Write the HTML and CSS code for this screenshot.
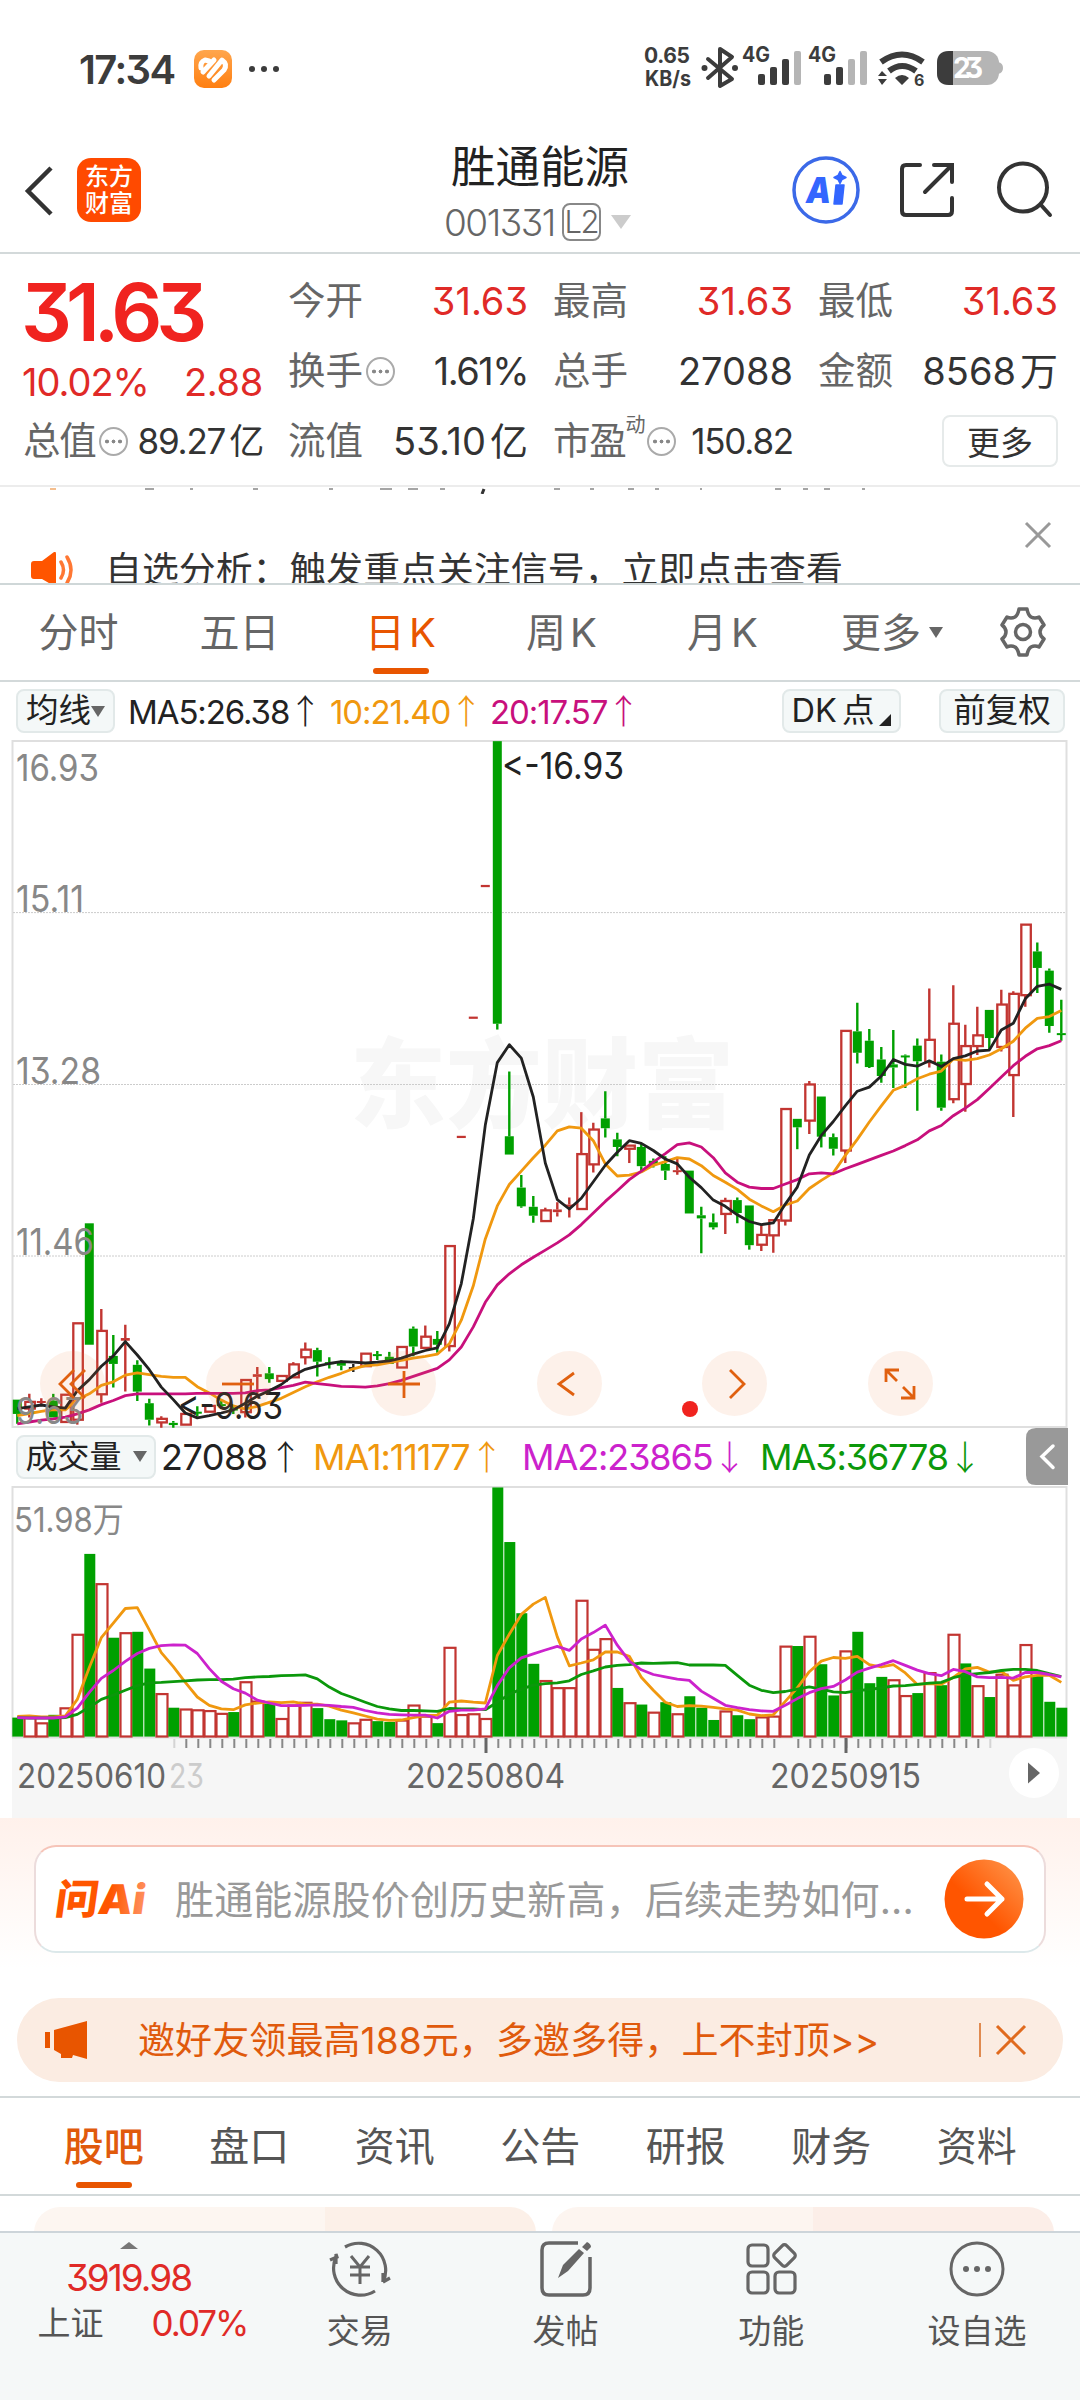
FILE: index.html
```html
<!DOCTYPE html>
<html lang="zh-CN">
<head>
    <meta charset="UTF-8">
    <meta name="viewport" content="width=device-width, initial-scale=1.0">
    <title>胜通能源 001331</title>
    <link rel="stylesheet" href="styles.css">
</head>
<body>
    <!-- Status bar -->
    <div class="status-bar">
        <span class="clock">17:34</span>
        <svg class="app-badge" width="38" height="38" viewBox="0 0 38 38">
            <defs><linearGradient id="badge" x1="0" y1="0" x2="0" y2="1"><stop offset="0" stop-color="#ffa64d"/><stop offset="1" stop-color="#ff7f11"/></linearGradient></defs>
            <rect width="38" height="38" rx="10" fill="url(#badge)"/>
            <g stroke="#fff" stroke-width="5" stroke-linecap="round" stroke-linejoin="round" fill="none"><path d="M7 18q-1-6 4-8l4 1M9 22L20 10M15 26L28 10q6 4 2 10L20 30"/></g>
        </svg>
        <svg class="dots" width="34" height="8" viewBox="0 0 34 8"><g fill="#3c3c3c"><circle cx="4" cy="4" r="3"/><circle cx="16" cy="4" r="3"/><circle cx="28" cy="4" r="3"/></g></svg>
        <svg class="status-icons" width="364" height="70" viewBox="640 35 364 70">
            <g fill="#3c3c3c" font-family="Inter" font-weight="700">
                <text x="644" y="64" font-size="21" textLength="46">0.65</text>
                <text x="645" y="87" font-size="21" textLength="46" lengthAdjust="spacingAndGlyphs">KB/s</text>
                <text x="742" y="63" font-size="21" textLength="28" lengthAdjust="spacingAndGlyphs">4G</text>
                <text x="808" y="63" font-size="21" textLength="28" lengthAdjust="spacingAndGlyphs">4G</text>
                <text x="914" y="87" font-size="16">6</text>
            </g>
            <path d="M708 60l24 20-12 7V50l12 8-24 21" fill="none" stroke="#3c3c3c" stroke-width="4" stroke-linejoin="round" stroke-linecap="round"/>
            <circle cx="704.500" cy="69" r="3" fill="#3c3c3c"/><circle cx="735" cy="69" r="3" fill="#3c3c3c"/>
            <g fill="#3c3c3c">
                <rect x="758" y="75" width="7" height="11" rx="2"/><rect x="770" y="68" width="7" height="18" rx="2"/><rect x="782" y="60" width="7" height="26" rx="2"/>
                <rect x="824" y="75" width="7" height="11" rx="2"/><rect x="836" y="68" width="7" height="18" rx="2"/>
            </g>
            <g fill="#b5b5b5">
                <rect x="794" y="52" width="7" height="34" rx="2"/><rect x="848" y="60" width="7" height="26" rx="2"/><rect x="860" y="52" width="7" height="34" rx="2"/>
            </g>
            <g fill="none" stroke="#3c3c3c" stroke-width="6"><path d="M881 63q21-15 42 0M889 72q13-10 27 0"/></g>
            <path d="M895 79q7-6 14 0l-7 7zM878 77l4-5 5 5zM878 80h9l-5 6z" fill="#3c3c3c"/>
            <rect x="937" y="52" width="62" height="34" rx="12" fill="#b5b5b5"/>
            <path d="M998 63q5 1 5 6t-5 6z" fill="#b5b5b5"/>
            <path d="M953 52v34h-4q-12 0-12-12V64q0-12 12-12z" fill="#3c3c3c"/>
            <text x="953" y="79" font-family="Inter" font-weight="700" font-size="28" fill="#fff" textLength="30">23</text>
        </svg>
    </div>

    <!-- Title bar -->
    <header class="title-bar">
        <svg class="back" width="30" height="54" viewBox="0 0 30 54"><path d="M27 4L4 27l23 23" fill="none" stroke="#333" stroke-width="4.500"/></svg>
        <div class="logo">东方<br>财富</div>
        <div class="stock">
            <h1>胜通能源</h1>
            <div class="code">001331<span class="level">L2</span><i class="tri-down"></i></div>
        </div>
        <svg class="title-icons" width="264" height="70" viewBox="790 155 264 70">
            <circle cx="826" cy="190" r="32" fill="none" stroke="#3b69e8" stroke-width="3.500"/>
            <text x="806" y="203" font-family="Inter" font-weight="900" font-style="italic" font-size="36" fill="#3366ff" textLength="25" lengthAdjust="spacingAndGlyphs">A</text>
            <path d="M836 185h8l-2 19h-8zM840 171.500l2 4 4 2-4 2-2 4-2-4-4-2 4-2z" fill="#3366ff" stroke="#3366ff" stroke-width="1.500" stroke-linejoin="round"/>
            <g fill="none" stroke="#333" stroke-width="4" stroke-linecap="round">
                <path d="M920 165h-14q-4 0-4 4v42q0 4 4 4h42q4 0 4-4v-13M934 165h18v17M951 166l-26 26"/>
                <circle cx="1023" cy="187.500" r="24"/><path d="M1041 205l9 10"/>
            </g>
        </svg>
    </header>

    <!-- Quote -->
    <section class="quote">
        <div class="price">31.63</div>
        <div class="cell"><label>今开</label><b class="red">31.63</b></div>
        <div class="cell"><label>最高</label><b class="red">31.63</b></div>
        <div class="cell"><label>最低</label><b class="red">31.63</b></div>
        <div class="cell change"><b class="red">10.02%</b><b class="red">2.88</b></div>
        <div class="cell"><label>换手</label><i class="more-dots"></i><b class="pct">1.61%</b></div>
        <div class="cell"><label>总手</label><b>27088</b></div>
        <div class="cell"><label>金额</label><b>8568<span class="unit">万</span></b></div>
        <div class="cell small"><label>总值</label><i class="more-dots"></i><b>89.27<span class="unit">亿</span></b></div>
        <div class="cell"><label>流值</label><b>53.10<span class="unit">亿</span></b></div>
        <div class="cell small"><label>市盈</label><sup>动</sup><i class="more-dots"></i><b>150.82</b></div>
        <div class="cell last"><button class="more-btn">更多</button></div>
    </section>

    <!-- Scrolling notice -->
    <section class="notice">
        <svg class="tail" width="1080" height="6" viewBox="0 0 1080 6"><path d="M145 1h9M190 1h3M253 1h5M329 1h4M380 1h12M408 1h10M440 1h5M554 1h6M590 1h4M628 1h6M655 1h4M700 1h2M775 1h6M803 1h5M824 1h6M862 1h3" stroke="#888" stroke-width="1.500"/><path d="M50 1h6" stroke="#f0a868" stroke-width="1.500"/><path d="M484 1l-2 5" stroke="#333" stroke-width="3"/></svg>
        <svg class="close" width="28" height="28" viewBox="0 0 28 28"><path d="M2 2l24 24M26 2L2 26" stroke="#999" stroke-width="3"/></svg>
        <div class="notice-line">
            <svg width="44" height="36" viewBox="0 0 44 36"><path d="M3 9h8L23 0q2-1 2 2v30q0 3-2 2L11 27H3q-3 0-3-3V12q0-3 3-3z" fill="#ff5500"/><path d="M30 10q5 8 0 16M36 5q8 13 0 26" fill="none" stroke="#ff7733" stroke-width="3.500" stroke-linecap="round"/></svg>
            <span>自选分析：触发重点关注信号，立即点击查看</span>
        </div>
    </section>

    <!-- Period tabs -->
    <nav class="period-tabs">
        <span>分时</span>
        <span>五日</span>
        <span class="active">日<u>K</u></span>
        <span>周<u>K</u></span>
        <span>月<u>K</u></span>
        <span>更多<i class="tri-down dark"></i></span>
        <svg width="50" height="52" viewBox="-25 -26 50 52"><path d="M-4-23h8q1 6 4 8 4 2 8 0l5 8q-4 3-4 7t4 7l-5 8q-4-2-8 0-3 2-4 8h-8q-1-6-4-8-4-2-8 0l-5-8q4-3 4-7t-4-7l5-8q4 2 8 0 3-2 4-8z" fill="none" stroke="#666" stroke-width="3.500" stroke-linejoin="round"/><circle r="7.500" fill="none" stroke="#666" stroke-width="3.500"/></svg>
    </nav>

    <!-- Moving averages -->
    <div class="ma-row">
        <span class="chip">均线<i class="tri-down dark"></i></span>
        <span class="ma5">MA5:26.38<em>↑</em></span>
        <span class="ma10">10:21.40<em>↑</em></span>
        <span class="ma20">20:17.57<em>↑</em></span>
        <span class="chip dk">DK<span>点</span><i class="corner"></i></span>
        <span class="chip adj">前复权</span>
    </div>

    <!-- K line -->
    <div class="chart-box">
        <svg id="k-chart" width="1080" height="688" viewBox="0 740 1080 688"></svg>
        <div class="tools">
            <span><svg width="30" height="32" viewBox="0 0 30 32"><path d="M16 2L2 16l14 14M27 2L13 16l14 14"/></svg></span>
            <span><svg width="34" height="32" viewBox="0 0 34 32"><path d="M1 16h32"/></svg></span>
            <span><svg width="34" height="32" viewBox="0 0 34 32"><path d="M1 16h32M17 3v27"/></svg></span>
            <span><svg width="30" height="32" viewBox="0 0 30 32"><path d="M20 5L5 16l15 11"/></svg></span>
            <span><svg width="30" height="32" viewBox="0 0 30 32"><path d="M10 2l14 14-14 14"/></svg></span>
            <span><svg width="34" height="34" viewBox="0 0 34 34"><path d="M3 15V3h13M3 3l11 11M31 19v12H18M31 31L20 20"/></svg></span>
        </div>
    </div>

    <!-- Volume -->
    <div class="vol-row">
        <span class="chip">成交量<i class="tri-down dark"></i></span>
        <span class="v0">27088<em>↑</em></span>
        <span class="v1">MA1:11177<em>↑</em></span>
        <span class="v2">MA2:23865<em>↓</em></span>
        <span class="v3">MA3:36778<em>↓</em></span>
        <svg class="drawer" width="42" height="57" viewBox="0 0 42 57"><path d="M42 0H10Q0 0 0 10v37q0 10 10 10h32z" fill="#999"/><path d="M27 18L16 28.500l11 11" fill="none" stroke="#fff" stroke-width="3.500" stroke-linecap="round"/></svg>
    </div>
    <svg id="vol-chart" width="1080" height="332" viewBox="0 1486 1080 332"></svg>

    <!-- AI question -->
    <section class="ai">
        <div class="ai-box">
            <svg class="ai-logo" width="96" height="46" viewBox="0 0 96 46">
                <defs><linearGradient id="ask" x1="0" y1="0" x2="1" y2="0"><stop offset=".6" stop-color="#ff5500"/><stop offset="1" stop-color="#ff9160"/></linearGradient></defs>
                <text x="0" y="38" transform="skewX(-8) translate(5 0)" font-family="Inter, 'Noto Sans CJK SC'" font-weight="900" font-size="41" textLength="90" lengthAdjust="spacingAndGlyphs" fill="url(#ask)">问Ai</text>
            </svg>
            <span>胜通能源股价创历史新高，后续走势如何...</span>
            <svg width="80" height="80" viewBox="0 0 80 80">
                <defs><linearGradient id="go" x1="0" y1="1" x2="1" y2="0"><stop offset=".4" stop-color="#ff5500"/><stop offset="1" stop-color="#ff9a50"/></linearGradient></defs>
                <circle cx="40" cy="40" r="39.500" fill="url(#go)"/><path d="M23 40h35M43 25l15 15-15 15" fill="none" stroke="#fff" stroke-width="5" stroke-linecap="round" stroke-linejoin="round"/>
            </svg>
        </div>
        <div class="invite">
            <svg width="44" height="40" viewBox="0 0 44 40"><path d="M0 12h5v16H0zM9 10l33-9v38l-14-4-1 3H16v-4l-7-4z" fill="#e85500"/></svg>
            <span>邀好友领最高188元，多邀多得，上不封顶&gt;&gt;</span>
            <i class="sep"></i>
            <svg width="32" height="32" viewBox="0 0 32 32"><path d="M2 2l28 28M30 2L2 30" stroke="#e06a1e" stroke-width="3"/></svg>
        </div>
    </section>

    <!-- Content tabs -->
    <nav class="info-tabs">
        <span class="active">股吧</span>
        <span>盘口</span>
        <span>资讯</span>
        <span>公告</span>
        <span>研报</span>
        <span>财务</span>
        <span>资料</span>
    </nav>
    <div class="cards">
        <div class="card"></div>
        <div class="card pink"></div>
    </div>

    <!-- Bottom bar -->
    <footer class="bottom-bar">
        <div class="index">
            <i class="tri-up"></i>
            <b>3919.98</b>
            <div class="index-row"><span>上证</span><b>0.07%</b></div>
        </div>
        <div class="action">
            <svg width="64" height="60" viewBox="-32 -30 64 60"><g fill="none" stroke="#666" stroke-width="3.200"><path d="M-15-22A27 27 0 0 1 23 13M15 22A27 27 0 0 1-24-12"/><path d="M-30-9l7-3-1-3v10M30 9l-7 4M23 13l0-9" /><path d="M-9-13L0-2l9-11M0-2v17M-10-2h20M-10 6h20" stroke-width="3"/></g></svg>
            <span>交易</span>
        </div>
        <div class="action">
            <svg width="64" height="60" viewBox="-32 -30 64 60"><path d="M12-26h-29q-7 0-7 7v38q0 7 7 7h34q7 0 7-7V-12" fill="none" stroke="#666" stroke-width="3.500"/><path d="M-8 9l5-13L13-20l5 4L2 2zM16-22l5-5q4 2 4 5l-4 4z" fill="#666"/></svg>
            <span>发帖</span>
        </div>
        <div class="action">
            <svg width="64" height="60" viewBox="-32 -30 64 60"><g fill="none" stroke="#666" stroke-width="3.200"><rect x="-23" y="-24" width="20" height="21" rx="4"/><rect x="-23" y="3" width="20" height="21" rx="4"/><rect x="4" y="3" width="20" height="21" rx="4"/><rect x="5" y="-22" width="17" height="17" rx="3" transform="rotate(45 13.500 -13.500)"/></g></svg>
            <span>功能</span>
        </div>
        <div class="action">
            <svg width="64" height="60" viewBox="-32 -30 64 60"><circle r="26" fill="none" stroke="#666" stroke-width="3"/><g fill="#666"><circle cx="-11" r="3"/><circle r="3"/><circle cx="11" r="3"/></g></svg>
            <span>设自选</span>
        </div>
    </footer>
    <script src="chart.js"></script>
</body>
</html>
```
FILE: styles.css
```css
* {
    box-sizing: border-box;
}

body {
    margin: 0;
    width: 1080px;
    height: 2400px;
    overflow: hidden;
    background-color: #fff;
    color: #333;
    font-family: Inter, "Noto Sans CJK SC", sans-serif;
    font-feature-settings: "cv09";
    font-size: 37px;
    line-height: 1;
    white-space: nowrap;
}

svg {
    display: block;
    flex: none;
}

i, em {
    font-style: normal;
}

u {
    text-decoration: none;
    margin-left: 4px;
}

b, h1 {
    font-weight: 400;
    margin: 0;
}

.red {
    color: #e02a27;
}

.tri-down {
    width: 0;
    height: 0;
    border: 10px solid transparent;
    border-top: 14px solid #ccc;
    border-bottom: 0;
}

.tri-down.dark {
    border-width: 11px 7px 0;
    border-top-color: #666;
}

/* status bar */
.status-bar {
    display: flex;
    align-items: center;
    height: 138px;
    padding: 0 76px 0 79px;
}

.clock {
    width: 115px;
    padding-top: 2px;
    font-size: 40px;
    font-weight: 600;
    color: #3c3c3c;
    letter-spacing: -1.6px;
}

.dots {
    margin-left: 16px;
}

.status-icons {
    margin-left: auto;
}

/* title bar */
.title-bar {
    display: flex;
    height: 116px;
    padding-left: 24px;
    border-bottom: 2px solid #d3d9da;
}

.back {
    margin-top: 26px;
}

.logo {
    width: 64px;
    height: 64px;
    margin: 20px 0 0 23px;
    padding-top: 5px;
    border-radius: 14px;
    background-color: #ff4a00;
    color: #fff;
    font-size: 24px;
    font-weight: 500;
    line-height: 27px;
    text-align: center;
}

.stock {
    width: 240px;
    margin: 7px 0 0 279px;
}

.stock h1 {
    width: 240px;
    text-align: center;
    font-size: 44.500px;
    line-height: 44px;
    color: #222;
}

.code {
    display: flex;
    align-items: center;
    margin-top: 13px;
    padding-left: 24px;
    height: 40px;
    font-size: 37px;
    font-weight: 300;
    letter-spacing: -1.5px;
    color: #666;
}

.level {
    width: 39px;
    height: 38px;
    margin: 0 10px 0 7px;
    border: 2px solid #888;
    border-radius: 8px;
    font-size: 31px;
    line-height: 34px;
    text-align: center;
}

.title-icons {
    margin: 17px 0 0 130px;
}

/* quote */
.quote {
    display: grid;
    grid-template-columns: repeat(4, 240px);
    grid-auto-rows: 70px;
    column-gap: 25px;
    height: 233px;
    padding: 12px 0 0 23px;
    border-bottom: 2px solid #ececec;
}

.price {
    margin-left: -2px;
    padding-top: 11px;
    color: #f0231f;
    font-size: 80px;
    line-height: 70px;
    font-weight: 600;
    letter-spacing: -6px;
}

.cell {
    display: flex;
    align-items: center;
    font-size: 38px;
    letter-spacing: 0;
}

.cell label {
    color: #666;
    font-size: 37.500px;
}

.cell b {
    margin-left: auto;
}

.cell b.pct {
    letter-spacing: -1.5px;
}

.unit {
    margin-left: 4px;
}

.cell.change {
    padding-top: 22px;
    letter-spacing: -.3px;
}

.change b:first-child {
    margin-left: -1px;
    letter-spacing: -1px;
}

.cell.small {
    letter-spacing: -1.200px;
}

.small b {
    font-size: 35px;
}

.cell sup {
    align-self: flex-start;
    margin-top: 9px;
    font-size: 20px;
    color: #666;
}

.more-dots {
    width: 29px;
    height: 29px;
    margin-left: 3px;
    border: 2px solid #aaa;
    border-radius: 50%;
    background: radial-gradient(circle at 6px 12.500px, #888 1.700px, transparent 2.200px), radial-gradient(circle at 12.500px 12.500px, #888 1.700px, transparent 2.200px), radial-gradient(circle at 19px 12.500px, #888 1.700px, transparent 2.200px);
}

.more-btn {
    width: 116px;
    height: 52px;
    margin-left: auto;
    padding: 0;
    border: 2px solid #e6eaea;
    border-radius: 8px;
    background-color: #fff;
    color: #333;
    font: 33px "Noto Sans CJK SC", sans-serif;
    line-height: 44px;
}

/* notice */
.notice {
    height: 98px;
    overflow: hidden;
    border-bottom: 2px solid #cfd7d8;
}

.tail {
    margin-top: 1px;
}

.notice .close {
    margin: 27px 0 0 1024px;
}

.notice-line {
    display: flex;
    align-items: center;
    height: 40px;
    margin-top: 1px;
    padding-left: 31px;
    font-size: 36.900px;
}

.notice-line span {
    margin-left: 30px;
}

/* period tabs */
.period-tabs {
    display: flex;
    height: 97px;
    border-bottom: 2px solid #d3d9da;
    color: #666;
    font-size: 40px;
    line-height: 96px;
}

.period-tabs span {
    position: relative;
    left: -2px;
    width: 161px;
    text-align: center;
}

.period-tabs span:nth-child(6) {
    display: flex;
    align-items: center;
    gap: 8px;
    width: 158px;
    padding-left: 38px;
}

.period-tabs svg {
    margin: 21px 0 0 35px;
}

.active {
    color: #e85500;
}

.active::after {
    content: "";
    position: absolute;
    left: 50%;
    bottom: 6px;
    width: 56px;
    height: 6px;
    margin-left: -28px;
    border-radius: 3px;
    background-color: #e85500;
}

/* chips and moving averages */
.chip {
    display: flex;
    align-items: center;
    justify-content: center;
    height: 44px;
    border: 2px solid #e2e9e9;
    border-radius: 8px;
    background-color: #f4f8f8;
    color: #222;
    font-size: 32.500px;
    letter-spacing: 0;
}

.ma-row, .vol-row {
    display: flex;
    align-items: center;
    height: 58px;
    padding-left: 16px;
    color: #222;
    font-size: 33px;
    letter-spacing: -1.100px;
}

.ma-row em, .vol-row em {
    font-family: "Noto Sans CJK SC";
    letter-spacing: 0;
    font-size: 34px;
    font-weight: 300;
}

.ma-row em {
    margin: 0 -6px 0 -1px;
}

.ma-row .chip:first-child {
    width: 99px;
}

.ma5 {
    width: 202px;
    padding-left: 13px;
}

.ma10, .v1 {
    color: #f0980f;
}

.ma10 {
    width: 160px;
    padding-left: 13px;
}

.ma20 {
    width: 160px;
    padding-left: 13px;
    color: #c8107c;
}

.chip.dk {
    width: 119px;
    margin-left: auto;
    gap: 5px;
}

.corner {
    align-self: flex-end;
    margin-bottom: 5px;
    border: 6px solid #222;
    border-top-color: transparent;
    border-left-color: transparent;
}

.chip.adj {
    width: 126px;
    margin: 0 15px 0 38px;
}

/* charts */
.chart-box {
    position: relative;
    height: 687px;
}

.tools {
    position: absolute;
    left: 40px;
    top: 611px;
    display: flex;
    gap: 100.600px;
}

.tools span {
    display: flex;
    align-items: center;
    justify-content: center;
    width: 65px;
    height: 65px;
    border-radius: 50%;
    background-color: rgba(235, 130, 60, .11);
}

.tools path {
    fill: none;
    stroke: #e0600f;
    stroke-width: 2.800;
}

.vol-row {
    height: 59px;
    font-size: 36px;
}

.vol-row .chip {
    width: 140px;
    gap: 11px;
    margin-right: 5px;
    font-size: 32px;
}

.v0 {
    width: 152px;
    letter-spacing: -.5px;
}

.v0 em {
    margin-left: 1px;
}

.v1 {
    width: 209px;
}

.v2 {
    width: 238px;
    color: #cc22cc;
}

.v3 {
    color: #0b980b;
}

.drawer {
    margin: 0 12px 0 auto;
}

/* ai */
.ai {
    height: 280px;
    padding: 27px 0 0 34px;
    background: linear-gradient(#fff1eb, #fff 150px);
    border-bottom: 2px solid #d3d9da;
}

.ai-box {
    display: flex;
    align-items: center;
    width: 1012px;
    height: 108px;
    padding-left: 18px;
    border: 2px solid;
    border-color: #f6c4b8 #ecdcdc #dce8ea;
    border-radius: 22px;
    background-color: #fff;
    color: #999;
    font-size: 39px;
}

.ai-box span {
    width: 769px;
    margin-left: 25px;
    letter-spacing: .15px;
}

.invite {
    display: flex;
    align-items: center;
    width: 1046px;
    height: 84px;
    margin: 45px 0 0 -17px;
    padding-left: 28px;
    border-radius: 42px;
    background-color: #fbece2;
    color: #e05a0c;
    font-size: 37px;
}

.invite span {
    width: 841px;
    margin-left: 49px;
    letter-spacing: .1px;
}

.sep {
    width: 2px;
    height: 34px;
    margin-right: 14px;
    background-color: #e08a50;
}

/* content tabs */
.info-tabs {
    display: flex;
    height: 98px;
    padding-left: 31px;
    border-bottom: 2px solid #d3d9da;
    color: #555;
    font-size: 40px;
    line-height: 97px;
}

.info-tabs span {
    position: relative;
    width: 145.500px;
    text-align: center;
}

.info-tabs .active {
    color: #e05a0c;
    font-weight: 500;
}

.cards {
    display: flex;
    gap: 16px;
    height: 35px;
    padding: 11px 0 0 34px;
    overflow: hidden;
}

.card {
    width: 502px;
    height: 60px;
    border-radius: 26px;
    background: linear-gradient(90deg, #fdf6f1 58%, #fcf0e8 58%);
}

.card.pink {
    background: linear-gradient(90deg, #fdf5f0 52%, #fceee8 52%);
}

/* bottom bar */
.bottom-bar {
    display: flex;
    height: 169px;
    border-top: 2px solid #cdd5da;
    background-color: #f5f8f8;
    color: #666;
    font-size: 33px;
}

.index {
    display: flex;
    flex-direction: column;
    align-items: center;
    width: 257px;
    color: #e02a27;
}

.tri-up {
    margin-top: 9px;
    border: 9px solid transparent;
    border-top: 0;
    border-bottom: 7px solid #777;
}

.index b {
    margin-top: 10px;
    font-size: 37px;
    letter-spacing: -2px;
}

.index-row {
    display: flex;
    align-items: center;
    gap: 48px;
    margin: 10px 0 0 30px;
}

.index-row span {
    margin-left: -2px;
    color: #555;
}

.index-row b {
    margin: 0;
    font-size: 35px;
}

.action {
    display: flex;
    flex-direction: column;
    align-items: center;
    width: 205.700px;
    padding-top: 6px;
    color: #555;
}

.action span {
    margin-top: 16px;
}
```
FILE: chart.js
```javascript
// type, body top, body bottom, wick top, wick bottom (r = up, g = down, k = flat)
const candles = `g1500,1532,1500,1554 r1505,1520,1487,1540 r1503,1507,1497,1515 g1502,1540,1487,1540 r1489,1550,1489,1550 r1329,1545,1329,1556
g1105,1377,1105,1377 r1346,1488,1297,1507 g1402,1420,1355,1473 r1362,1368,1332,1482 g1422,1482,1412,1503 g1508,1545,1498,1558
r1543,1551,1537,1563 g1552,1557,1548,1563 r1532,1556,1532,1556 g1527,1530,1515,1538 r1514,1527,1514,1527 g1510,1514,1503,1520
g1520,1524,1512,1532 r1456,1528,1456,1540 r1443,1449,1427,1490 g1441,1454,1427,1462 r1447,1458,1447,1458 r1421,1450,1416,1450
r1388,1405,1372,1421 g1389,1415,1384,1448 g1416,1418,1405,1430 g1414,1424,1412,1434 k1427,1430,1420,1438 r1397,1425,1397,1425
g1398,1401,1391,1411 g1404,1420,1393,1420 r1382,1428,1382,1428 g1341,1381,1336,1403 r1359,1384,1334,1384 g1364,1377,1346,1395
r1156,1380,1156,1392 r909,914,909,914 r642,647,642,647 r347,352,347,352 g25,658,25,671 g910,951,765,951 g1025,1067,997,1070 g1068,1088,1044,1104
r1076,1100,1070,1100 r1074,1080,1058,1090 r1063,1067,1047,1092 r950,1073,856,1073 r895,973,880,991 g870,892,809,913 g917,934,902,955
r931,938,931,970 g934,977,927,990 g965,972,960,980 g972,987,955,1008 r986,988,960,996 g987,1083,987,1083 g1087,1094,1068,1172
g1103,1114,1083,1119 r1055,1084,1048,1129 g1053,1082,1047,1105 g1065,1154,1065,1164 r1131,1153,1108,1167 r1098,1132,1098,1171
r849,1099,849,1110 g871,890,871,939 r794,875,786,905 g821,911,821,935 g912,938,904,953 r674,942,674,970 g675,723,611,747
g696,755,670,757 g738,775,710,790 g749,756,672,802 g729,731,727,802 g707,742,691,853 r694,744,579,756 g743,846,727,853
r658,827,572,836 r708,793,660,855 r684,708,620,728 g627,690,627,717 r615,710,582,720 r591,773,585,867 r436,594,436,620
g496,533,476,589 g539,663,534,678 g679,681,604,696`.split(/\s+/);

const ma = [
    ['#f0980f', '1536 1531 1526 1522 1523 1500 1487 1468 1460 1445 1440 1444 1448 1450 1450 1471 1485 1501 1514 1521 1515 1506 1497 1484 1471 1460 1450 1441 1431 1424 1422 1417 1412 1407 1403 1398 1375 1322 1245 1140 1066 1018 988 958 930 898 889 892 920 972 999 997 990 975 967 958 961 976 998 1013 1029 1051 1066 1079 1064 1055 1027 1009 992 953 917 878 842 807 796 781 771 764 737 740 736 728 714 697 668 646 642 628'],
    ['#c8107c', '1554 1550 1546 1543 1539 1532 1523 1511 1502 1491 1487 1487 1487 1487 1487 1486 1486 1486 1486 1485 1480 1478 1473 1468 1461 1464 1467 1470 1471 1472 1469 1464 1457 1448 1439 1430 1411 1382 1337 1282 1243 1218 1198 1181 1165 1149 1131 1108 1082 1056 1032 1007 988 968 949 929 925 934 958 992 1013 1024 1027 1027 1017 1007 994 992 994 983 973 963 953 943 931 918 898 886 864 847 828 803 777 752 731 714 707 696'],
    ['#222', '1520 1516 1512 1516 1519 1480 1455 1425 1402 1370 1400 1433 1472 1500 1530 1541 1536 1530 1523 1508 1492 1480 1466 1446 1432 1425 1419 1415 1416 1418 1416 1413 1407 1398 1390 1384 1330 1240 1095 885 745 705 735 822 970 1052 1073 1049 1012 975 946 920 926 942 961 972 1002 1025 1053 1067 1086 1101 1108 1104 1062 1024 952 908 877 842 809 800 775 738 749 753 741 754 736 730 719 717 672 657 602 574 569 581']
];

const volumes = 'g1309 r1305 r1321 g1302 r1283 r1097 g895 r969 g1107 r1093 g1092 g1185 r1247 g1284 r1286 r1288 r1290 r1297 g1295 r1217 r1266 g1274 r1310 r1276 r1269 g1285 g1313 g1316 r1321 r1312 g1318 g1320 r1314 r1276 r1304 g1323 r1130 r1300 r1298 r1310 g727 g865 g1045 g1173 r1214 r1232 r1232 r1011 r1135 r1108 g1234 r1270 g1276 r1294 g1270 r1298 g1255 g1284 g1315 r1291 g1303 g1313 r1306 r1304 r1127 g1128 r1102 g1174 g1253 r1139 g1092 g1222 g1206 r1212 r1252 g1247 r1194 g1227 r1097 g1172 r1227 g1257 r1198 r1225 r1123 g1202 g1269 g1284'.split(' ');

const volMa = [
    ['#f0980f', '1306 1305 1307 1307 1305 1263 1182 1107 1070 1033 1031 1087 1145 1180 1220 1257 1278 1287 1289 1277 1272 1269 1271 1269 1275 1275 1280 1290 1297 1305 1313 1316 1315 1309 1304 1303 1270 1267 1270 1272 1152 1098 1048 1022 1005 1105 1178 1171 1163 1143 1143 1154 1207 1240 1270 1281 1279 1280 1283 1287 1290 1300 1304 1302 1268 1234 1193 1166 1157 1159 1154 1175 1181 1175 1196 1225 1223 1225 1207 1186 1182 1194 1192 1215 1206 1202 1202 1220'],
    ['#0b980b', '1309 1310 1310 1310 1309 1301 1283 1263 1252 1240 1228 1221 1220 1218 1216 1214 1213 1213 1212 1208 1206 1205 1203 1202 1201 1211 1232 1248 1259 1270 1281 1287 1291 1291 1292 1293 1286 1287 1287 1289 1270 1250 1237 1227 1223 1221 1216 1200 1191 1181 1177 1175 1171 1172 1171 1170 1176 1176 1176 1177 1202 1227 1240 1246 1243 1237 1231 1237 1244 1246 1241 1238 1234 1229 1228 1225 1222 1220 1208 1201 1198 1195 1190 1187 1187 1190 1198 1205'],
    ['#cc22cc', '1309 1310 1310 1310 1307 1285 1245 1210 1190 1167 1147 1134 1127 1125 1126 1147 1185 1217 1236 1247 1265 1272 1279 1279 1278 1277 1278 1281 1283 1291 1297 1301 1302 1303 1303 1310 1293 1290 1290 1287 1228 1183 1158 1148 1138 1129 1139 1110 1094 1075 1126 1166 1188 1200 1206 1212 1215 1242 1260 1278 1284 1289 1292 1293 1278 1261 1246 1236 1230 1214 1194 1184 1175 1165 1177 1189 1198 1203 1187 1193 1206 1208 1207 1209 1195 1195 1200 1206']
];

const RED = '#c23531', GREEN = '#00a000';
const color = { r: RED, g: GREEN, k: '#222' };
const x = i => 17.3 + i * 12;
const priceY = v => 730 + v / 2.24;
const volY = v => 1200 + v / 2.529;

function line(values, y, stroke) {
    const points = values.split(' ').map((v, i) => x(i).toFixed(1) + ',' + y(+v).toFixed(1)).join(' ');
    return `<polyline points="${points}" fill="none" stroke="${stroke}" stroke-width="2.8" stroke-linejoin="round"/>`;
}

function text(str, tx, ty, width, size, fill, extra = '') {
    return `<text x="${tx}" y="${ty}" textLength="${width}" lengthAdjust="spacingAndGlyphs" font-size="${size}" fill="${fill}" ${extra}>${str}</text>`;
}

// K line chart
let k = '';
k += text('东方财富', 350, 1120, 384, 98, '#f7f7f7', 'font-weight="900"');
k += '<rect x="12.5" y="741" width="1054" height="686" fill="none" stroke="#dfdfdf" stroke-width="2"/>';
[912.6, 1084.5, 1256].forEach(y => {
    k += `<path d="M13 ${y}H1066" stroke="#ccc" stroke-width="1" stroke-dasharray="2 1"/>`;
});
candles.forEach((c, i) => {
    const t = c[0];
    const [top, bottom, high, low] = c.slice(1).split(',').map(v => priceY(+v));
    k += `<path d="M${x(i)} ${high}V${top}M${x(i)} ${bottom}V${low}" stroke="${color[t]}" stroke-width="2.4"/>`;
    if (t === 'r' && bottom - top > 3) {
        k += `<rect x="${x(i) - 4}" y="${top}" width="9.500" height="${bottom - top}" fill="none" stroke="${RED}" stroke-width="2.3"/>`;
    } else {
        k += `<rect x="${x(i) - 4.5}" y="${top}" width="9" height="${Math.max(2, bottom - top)}" fill="${color[t]}"/>`;
    }
});
ma.forEach(m => k += line(m[1], priceY, m[0]));
k += text('16.93', 16, 781, 83, 37, '#888') + text('15.11', 16, 912, 68, 37, '#888') + text('13.28', 16, 1084, 85, 37, '#888');
k += text('11.46', 16, 1255, 78, 37, '#888') + text('9.63', 16, 1424, 67, 37, '#888');
k += text('&lt;-16.93', 502, 779, 122, 37, '#222') + text('&lt;-9.63', 178, 1419, 105, 37, '#222');
k += '<circle cx="690" cy="1409" r="8" fill="#f0231f"/>';
document.getElementById('k-chart').innerHTML = k;

// Volume chart
let v = '';
v += '<rect x="12" y="1738" width="1055" height="80" fill="#f6f6f6"/>';
v += '<path d="M12.500 1737V1487H1066.500V1737M12 1737.500H1067" fill="none" stroke="#dfdfdf" stroke-width="2"/>';
volumes.forEach((c, i) => {
    const top = volY(+c.slice(1));
    if (c[0] === 'r') {
        v += `<rect x="${x(i) - 4.8}" y="${top + 1}" width="11" height="${1735.500 - top}" fill="#fff" stroke="${RED}" stroke-width="2.2"/>`;
    } else {
        v += `<rect x="${x(i) - 5}" y="${top}" width="11" height="${1736.600 - top}" fill="${GREEN}"/>`;
    }
});
volMa.forEach(m => v += line(m[1], volY, m[0]));
for (let i = 13; i < 82; i++) {
    if (i === 39 || i === 64) continue;
    v += `<path d="M${x(i) + 1} 1739V1748" stroke="#888" stroke-width="2" opacity="${i === 13 || i === 81 ? 0.3 : 1}"/>`;
}
v += '<path d="M486 1738V1753M846 1738V1753" stroke="#666" stroke-width="3"/>';
v += text('51.98万', 14, 1532, 110, 34, '#888');
v += text('20250610', 17, 1788, 149, 34, '#666') + text('23', 169, 1788, 35, 34, '#ccc');
v += text('20250804', 406, 1788, 159, 34, '#666') + text('20250915', 770, 1788, 151, 34, '#666');
v += '<circle cx="1034" cy="1773" r="25" fill="#fff"/><path d="M1028 1762.500v21l12-10.500z" fill="#666"/>';
document.getElementById('vol-chart').innerHTML = v;
```
